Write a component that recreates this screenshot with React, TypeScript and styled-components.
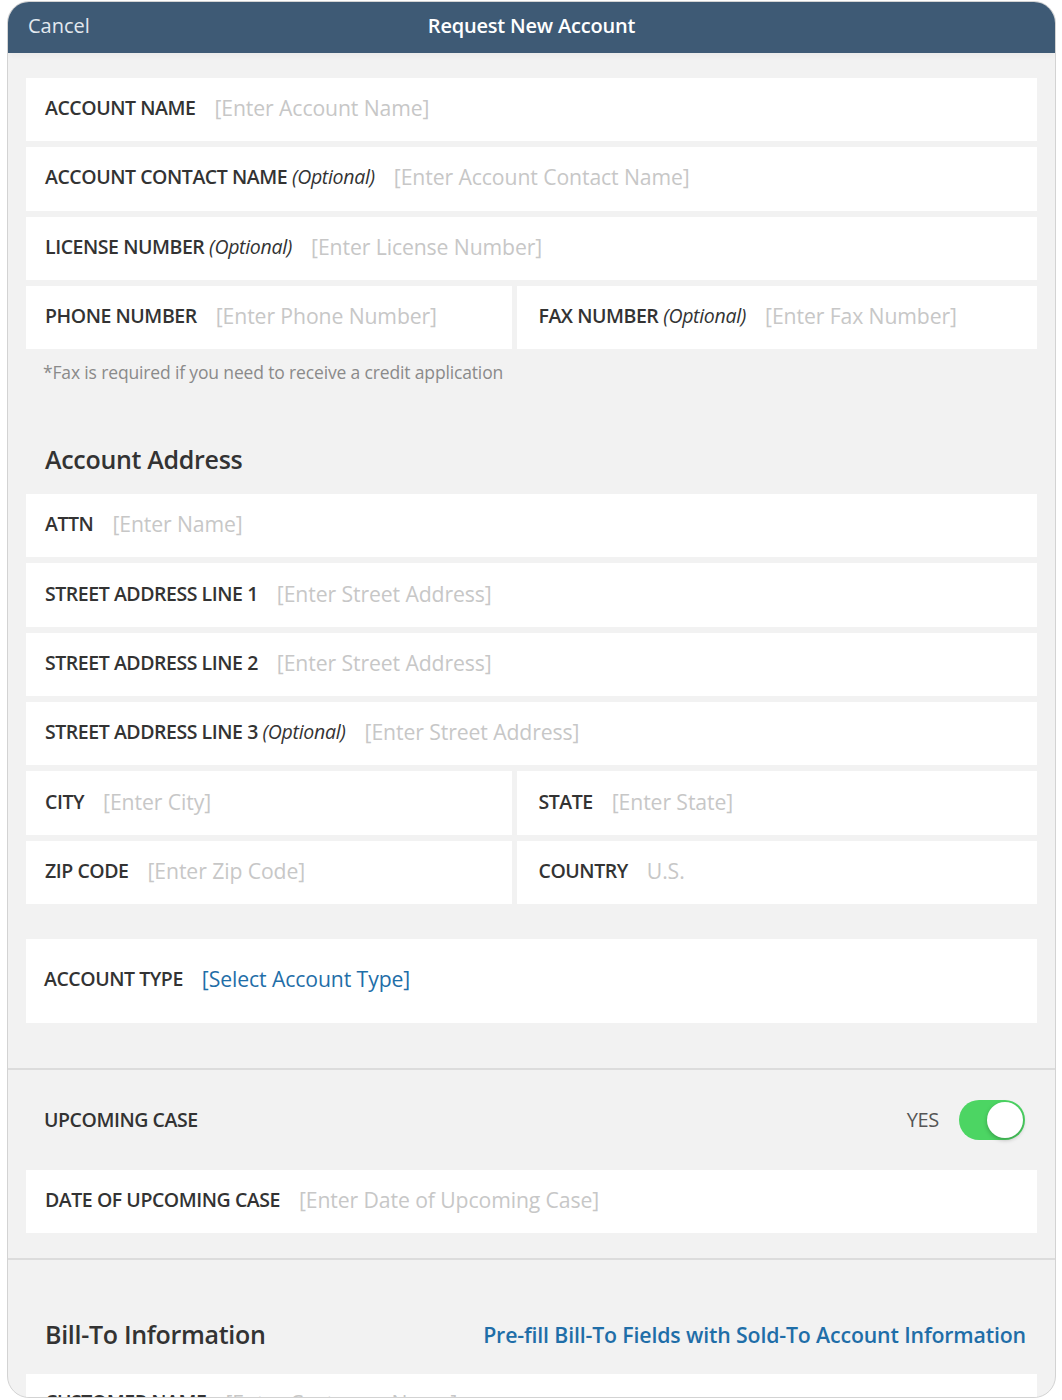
import React from "react";
import styled, { createGlobalStyle } from "styled-components";

const GlobalStyle = createGlobalStyle`
  html, body {
    margin: 0;
    padding: 0;
    background: #ffffff;
    font-family: "Open Sans", "Noto Sans", sans-serif;
  }
  * { box-sizing: border-box; }
`;

interface IField {
  label: string;
  optional?: boolean;
  placeholder: string;
}

const accountFields: IField[] = [
  { label: "ACCOUNT NAME", placeholder: "[Enter Account Name]" },
  { label: "ACCOUNT CONTACT NAME", optional: true, placeholder: "[Enter Account Contact Name]" },
  { label: "LICENSE NUMBER", optional: true, placeholder: "[Enter License Number]" },
];

const addressFields: IField[] = [
  { label: "ATTN", placeholder: "[Enter Name]" },
  { label: "STREET ADDRESS LINE 1", placeholder: "[Enter Street Address]" },
  { label: "STREET ADDRESS LINE 2", placeholder: "[Enter Street Address]" },
  { label: "STREET ADDRESS LINE 3", optional: true, placeholder: "[Enter Street Address]" },
];

const FieldContent = ({ field, link }: { field: IField; link?: boolean }) => (
  <>
    <Label>
      {field.label}
      {field.optional && <Optional> (Optional)</Optional>}
    </Label>
    <Value $link={link}>{field.placeholder}</Value>
  </>
);

export default function App() {
  return (
    <>
      <GlobalStyle />
      <Frame>
        <Header>
          <HeaderAction>Cancel</HeaderAction>
          <HeaderTitle>Request New Account</HeaderTitle>
          <span />
        </Header>

        <Section $bottom={45}>
          <Stack>
            {accountFields.map((f) => (
              <Row key={f.label}>
                <FieldContent field={f} />
              </Row>
            ))}
            <Split>
              <Row>
                <FieldContent field={{ label: "PHONE NUMBER", placeholder: "[Enter Phone Number]" }} />
              </Row>
              <Row $right>
                <FieldContent field={{ label: "FAX NUMBER", optional: true, placeholder: "[Enter Fax Number]" }} />
              </Row>
            </Split>
          </Stack>
          <Note>*Fax is required if you need to receive a credit application</Note>

          <SectionTitle>Account Address</SectionTitle>
          <Stack>
            {addressFields.map((f) => (
              <Row key={f.label}>
                <FieldContent field={f} />
              </Row>
            ))}
            <Split>
              <Row>
                <FieldContent field={{ label: "CITY", placeholder: "[Enter City]" }} />
              </Row>
              <Row $right>
                <FieldContent field={{ label: "STATE", placeholder: "[Enter State]" }} />
              </Row>
            </Split>
            <Split>
              <Row>
                <FieldContent field={{ label: "ZIP CODE", placeholder: "[Enter Zip Code]" }} />
              </Row>
              <Row $right>
                <FieldContent field={{ label: "COUNTRY", placeholder: "U.S." }} />
              </Row>
            </Split>
          </Stack>

          <TypeRow>
            <FieldContent field={{ label: "ACCOUNT TYPE", placeholder: "[Select Account Type]" }} link />
          </TypeRow>
        </Section>

        <Section $divider $bottom={25}>
          <ToggleRow>
            <Label>UPCOMING CASE</Label>
            <ToggleWrap>
              <ToggleText>YES</ToggleText>
              <Toggle $on>
                <Knob />
              </Toggle>
            </ToggleWrap>
          </ToggleRow>
          <Row>
            <FieldContent field={{ label: "DATE OF UPCOMING CASE", placeholder: "[Enter Date of Upcoming Case]" }} />
          </Row>
        </Section>

        <Section $divider $bottom={0}>
          <BillHead>
            <SectionTitle as="h2">Bill-To Information</SectionTitle>
            <PrefillLink>Pre-fill Bill-To Fields with Sold-To Account Information</PrefillLink>
          </BillHead>
          <LastRow>
            <FieldContent field={{ label: "CUSTOMER NAME", placeholder: "[Enter Customer Name]" }} />
          </LastRow>
        </Section>
      </Frame>
    </>
  );
}

const Frame = styled.div`
  width: 1049px;
  height: 1397px;
  margin: 1px 0 0 7px;
  border: 1px solid #d3d3d3;
  border-radius: 22px;
  overflow: hidden;
  background: #f2f2f2;
`;

const Header = styled.div`
  height: 51px;
  display: grid;
  grid-template-columns: 1fr auto 1fr;
  align-items: center;
  padding: 0 20px 4px;
  background: #3e5a75;
  box-shadow: 0 3px 6px rgba(0, 0, 0, 0.04);
`;

const HeaderAction = styled.span`
  font-size: 20px;
  color: #e3e9ef;
`;

const HeaderTitle = styled.span`
  font-size: 20px;
  font-weight: 600;
  color: #ffffff;
  letter-spacing: -0.2px;
`;

const Section = styled.div<{ $divider?: boolean; $bottom: number }>`
  padding: ${(p) => (p.$divider ? 0 : 25)}px 18px ${(p) => p.$bottom}px;
  border-top: ${(p) => (p.$divider ? "2px solid #dcdcdc" : "none")};
`;

const Stack = styled.div`
  display: flex;
  flex-direction: column;
  gap: 6px;
`;

const Split = styled.div`
  display: grid;
  grid-template-columns: 486fr 519fr;
  gap: 5px;
`;

const Row = styled.div<{ $right?: boolean }>`
  height: 63.3px;
  display: flex;
  align-items: center;
  gap: 19px;
  padding: 0 ${(p) => (p.$right ? 21 : 19)}px 4px;
  background: #ffffff;
  white-space: nowrap;
  overflow: hidden;
`;

const TypeRow = styled(Row)`
  height: 84px;
  margin-top: 35px;
  padding-left: 18px;
`;

const LastRow = styled(Row)`
  align-items: flex-start;
  padding-top: 14px;
`;

const Label = styled.span`
  font-size: 19.5px;
  font-weight: 600;
  letter-spacing: -0.45px;
  color: #333333;
  white-space: nowrap;
`;

const Optional = styled.em`
  font-weight: 400;
  letter-spacing: -0.3px;
`;

const Value = styled.span<{ $link?: boolean }>`
  font-size: 21.2px;
  letter-spacing: -0.1px;
  color: ${(p) => (p.$link ? "#1f6ea8" : "#c7c7c7")};
`;

const Note = styled.p`
  margin: 12px 0 0 17px;
  font-size: 17.5px;
  line-height: 22px;
  letter-spacing: -0.15px;
  color: #8a8a8a;
`;

const SectionTitle = styled.h3`
  margin: 60px 0 19px 19px;
  font-size: 25px;
  line-height: 32px;
  font-weight: 600;
  letter-spacing: -0.3px;
  color: #333333;
`;

const ToggleRow = styled.div`
  height: 100px;
  display: flex;
  align-items: center;
  justify-content: space-between;
  padding: 0 12px 0 18px;
`;

const ToggleWrap = styled.div`
  display: flex;
  align-items: center;
  gap: 20px;
`;

const ToggleText = styled.span`
  font-size: 20px;
  color: #555555;
  letter-spacing: -0.3px;
`;

const Toggle = styled.div<{ $on?: boolean }>`
  position: relative;
  width: 66px;
  height: 40px;
  border-radius: 20px;
  background: ${(p) => (p.$on ? "#4cd563" : "#e5e5e5")};
`;

const Knob = styled.div`
  position: absolute;
  top: 2px;
  right: 2px;
  width: 36px;
  height: 36px;
  border-radius: 50%;
  background: #ffffff;
  box-shadow: 0 2px 4px rgba(0, 0, 0, 0.25);
`;

const BillHead = styled.div`
  display: flex;
  align-items: center;
  justify-content: space-between;
  padding: 52px 11px 0 0;
  margin-bottom: 18px;
  height: 96px;

  h2 {
    margin: 0 0 0 19px;
  }
`;

const PrefillLink = styled.span`
  font-size: 21.3px;
  font-weight: 600;
  letter-spacing: -0.15px;
  color: #1f6ea8;
`;
